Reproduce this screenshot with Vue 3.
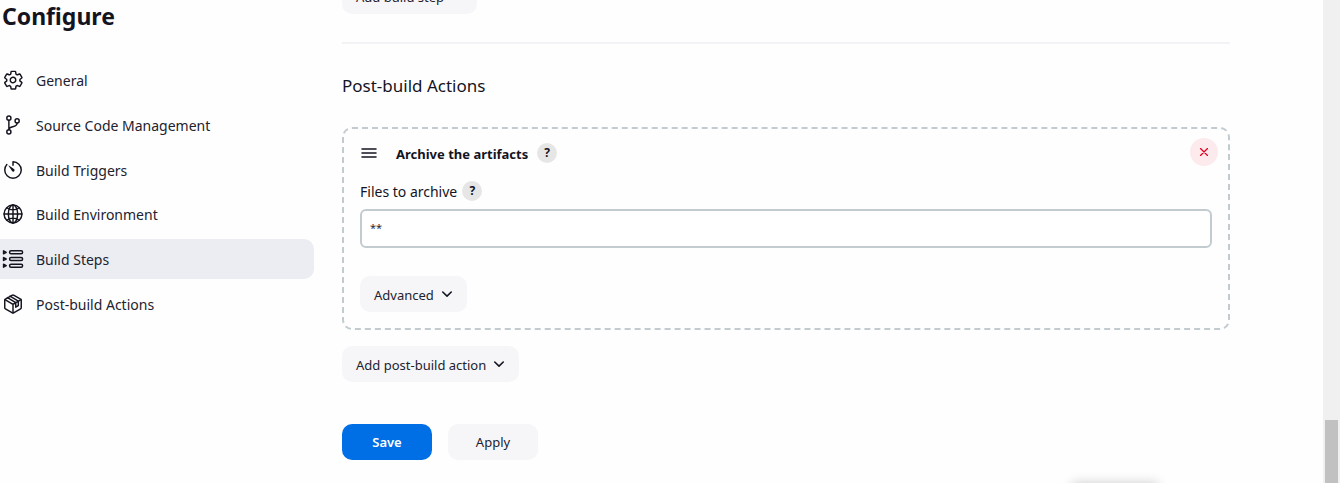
<script setup>
import { ref } from 'vue'

const sections = [
  { id: 'general', label: 'General' },
  { id: 'scm', label: 'Source Code Management' },
  { id: 'triggers', label: 'Build Triggers' },
  { id: 'environment', label: 'Build Environment' },
  { id: 'steps', label: 'Build Steps' },
  { id: 'post', label: 'Post-build Actions' }
]
const active = ref('steps')
const files = ref('**')
</script>

<template>
  <div class="page">
    <aside class="side">
      <h1>Configure</h1>
      <nav>
        <a
          v-for="s in sections"
          :key="s.id"
          :href="'#' + s.id"
          :class="{ active: active === s.id }"
          @click.prevent="active = s.id"
        >
          <svg v-if="s.id === 'general'" viewBox="0 0 512 512" aria-hidden="true">
            <path d="M262.3 192.3a64 64 0 1 0 57.4 57.4 64.100 64.100 0 0 0-57.400-57.400zM416.400 256a154 154 0 0 1-1.500 20.800l45.200 35.500a10.800 10.800 0 0 1 2.500 13.700l-42.800 74a10.800 10.800 0 0 1-13.100 4.600l-44.900-18.100a16.100 16.100 0 0 0-15.200 1.700 165 165 0 0 1-13.800 8 15.900 15.900 0 0 0-8.800 12.200l-6.700 47.900a11.100 11.100 0 0 1-10.800 9.200h-85.500a11.100 11.100 0 0 1-10.700-8.900l-6.700-47.800a16.100 16.100 0 0 0-9-12.300 155 155 0 0 1-13.700-8 16 16 0 0 0-15.100-1.700l-44.900 18.100a10.800 10.800 0 0 1-13.100-4.600l-42.800-74a10.800 10.800 0 0 1 2.500-13.700l38.200-30a16 16 0 0 0 6.100-14.100 159 159 0 0 1 0-15.900 16 16 0 0 0-6.100-13.900l-38.200-30a10.800 10.800 0 0 1-2.400-13.600l42.800-74a10.800 10.800 0 0 1 13.100-4.600l44.900 18.100a16.100 16.100 0 0 0 15.200-1.700 165 165 0 0 1 13.800-8 15.900 15.900 0 0 0 8.800-12.200l6.700-47.900a11.100 11.100 0 0 1 10.800-9.200h85.500a11.100 11.100 0 0 1 10.700 8.900l6.700 47.800a16.100 16.100 0 0 0 9 12.300 155 155 0 0 1 13.700 8 16 16 0 0 0 15.100 1.700l44.900-18.100a10.800 10.800 0 0 1 13.100 4.600l42.800 74a10.800 10.800 0 0 1-2.500 13.700l-38.200 30a16 16 0 0 0-6.100 14.100c.2 2.600.4 5.300.4 8z" />
          </svg>
          <svg v-else-if="s.id === 'scm'" viewBox="0 0 512 512" aria-hidden="true">
            <circle cx="160" cy="96" r="48" />
            <circle cx="160" cy="416" r="48" />
            <circle cx="352" cy="160" r="48" />
            <path d="M160 368V144M352 208c0 128-192 48-192 160" />
          </svg>
          <svg v-else-if="s.id === 'triggers'" viewBox="0 0 512 512" aria-hidden="true">
            <path d="M112.900 128.900A191.900 191.900 0 0 0 64 254.800C63.300 361 149.900 447.900 256.100 448 362.300 448 448 362.200 448 256S362.200 64.300 256.300 64v84" />
            <path class="solid" d="M234 279.300l-83-119.600a6.500 6.500 0 0 1 9-9l119.600 83a32.500 32.500 0 1 1-45.600 45.600z" />
          </svg>
          <svg v-else-if="s.id === 'environment'" viewBox="0 0 512 512" aria-hidden="true">
            <circle cx="256" cy="256" r="208" />
            <ellipse cx="256" cy="256" rx="108" ry="208" />
            <path d="M117 117c38 27 87 43 139 43s101-16 139-43M395 395c-38-27-87-43-139-43s-101 16-139 43M256 48v416M464 256H48" />
          </svg>
          <svg v-else-if="s.id === 'steps'" viewBox="0 0 512 512" aria-hidden="true">
            <rect x="176" y="66" width="304" height="68" rx="34" />
            <rect x="176" y="222" width="304" height="68" rx="34" />
            <rect x="176" y="378" width="304" height="68" rx="34" />
            <path d="M36 66v68l62-34zM36 222v68l62-34zM36 378v68l62-34z" />
          </svg>
          <svg v-else viewBox="0 0 512 512" aria-hidden="true">
            <path d="M448 341.400V170.600a32 32 0 0 0-15.900-27.600l-152-88.500a48 48 0 0 0-48.200 0l-152 88.500A32 32 0 0 0 64 170.600v170.800a32 32 0 0 0 15.900 27.600l152 88.500a48 48 0 0 0 48.200 0l152-88.500a32 32 0 0 0 15.900-27.600z" />
            <path d="M69 153l187 110 187-110M256 463V263M127 107l193 116v108l60-36V188L186 75" />
          </svg>
          <span>{{ s.label }}</span>
        </a>
      </nav>
    </aside>

    <main>
      <button type="button" class="btn">
        Add build step
        <svg viewBox="0 0 512 512" aria-hidden="true"><path d="M100 184l156 150 156-150" /></svg>
      </button>
      <hr />
      <h2>Post-build Actions</h2>

      <section class="chunk">
        <header>
          <svg class="handle" viewBox="0 0 16 16" aria-hidden="true"><path d="M1 5h14M1 9h14M1 13h14" /></svg>
          <b>Archive the artifacts</b>
          <button type="button" class="help" aria-label="Help for Archive the artifacts">?</button>
          <button type="button" class="remove" aria-label="Remove">
            <svg viewBox="0 0 8 8" aria-hidden="true"><path d="M0.500 0.500l7 7M7.500 0.500l-7 7" /></svg>
          </button>
        </header>
        <div class="field">
          <label for="files">Files to archive</label>
          <button type="button" class="help" aria-label="Help for Files to archive">?</button>
        </div>
        <input id="files" v-model="files" type="text" />
        <button type="button" class="btn">
          Advanced
          <svg viewBox="0 0 512 512" aria-hidden="true"><path d="M100 184l156 150 156-150" /></svg>
        </button>
      </section>

      <button type="button" class="btn">
        Add post-build action
        <svg viewBox="0 0 512 512" aria-hidden="true"><path d="M100 184l156 150 156-150" /></svg>
      </button>

      <footer>
        <button type="button" class="btn primary">Save</button>
        <button type="button" class="btn">Apply</button>
      </footer>
    </main>

    <div class="scrollbar"><i></i></div>
    <div class="toast"></div>
  </div>
</template>

<style>
body {
  margin: 0;
  overflow: hidden;
}
</style>

<style scoped>
.page {
  position: relative;
  display: grid;
  grid-template-columns: 314px minmax(0, 1fr) 17px;
  height: 100vh;
  overflow: hidden;
  background: #fefefe;
  color: #14141f;
  font-family: "Noto Sans", "Open Sans", sans-serif;
  font-size: 14px;
}
* {
  box-sizing: border-box;
}
svg {
  fill: none;
  stroke: currentColor;
  stroke-width: 34;
  stroke-linecap: round;
  stroke-linejoin: round;
  flex: none;
}
.solid {
  fill: currentColor;
  stroke: none;
}
h1 {
  margin: 0 0 28px 2px;
  font-size: 23px;
  line-height: 32px;
  font-weight: 700;
}
nav {
  display: flex;
  flex-direction: column;
  justify-content: space-between;
  height: 264px;
}
nav a {
  display: flex;
  align-items: center;
  gap: 12px;
  height: 40px;
  padding-left: 2px;
  border-radius: 0 10px 10px 0;
  color: #22222e;
  text-decoration: none;
}
nav a.active {
  background: #ecedf3;
}
nav svg {
  width: 22px;
  height: 22px;
  color: #14141f;
}
nav span {
  padding-top: 1px;
}
main {
  display: flex;
  flex-direction: column;
  align-items: flex-start;
  margin: -22px 93px 0 28px;
}
button {
  border: 0;
  padding: 0;
  font: inherit;
  color: inherit;
  cursor: pointer;
}
.btn {
  display: inline-flex;
  align-items: center;
  justify-content: center;
  gap: 6px;
  flex: none;
  height: 36px;
  padding: 1px 13px 0 14px;
  border-radius: 10px;
  background: #f6f6f9;
  color: #22222e;
  font-size: 13px;
}
.btn svg {
  width: 14px;
  height: 14px;
  color: #14141f;
  stroke-width: 58;
  margin-bottom: 2px;
}
hr {
  width: 100%;
  height: 2px;
  margin: 28px 0;
  border: 0;
  background: #f3f3f7;
}
h2 {
  margin: 0 0 28px;
  font-size: 17px;
  line-height: 27px;
  font-weight: 400;
}
.chunk {
  display: flex;
  flex-direction: column;
  align-items: flex-start;
  width: 100%;
  margin-bottom: 16px;
  padding: 9px 16px 16px;
  border: 2px dashed #c2cbd0;
  border-radius: 10px;
}
header {
  display: flex;
  align-items: center;
  align-self: stretch;
  height: 28px;
  margin-right: -6px;
}
header b {
  margin: 3px 9px 0 19px;
  font-size: 13px;
}
header .help {
  margin-top: 2px;
}
.handle {
  width: 16px;
  height: 16px;
  margin-left: 1px;
  stroke-width: 1.500;
}
.help {
  width: 20px;
  height: 20px;
  border-radius: 50%;
  background: #e6e6e7;
  font-size: 12px;
  line-height: 20px;
  font-weight: 700;
}
.remove {
  display: grid;
  place-items: center;
  width: 28px;
  height: 28px;
  margin-left: auto;
  border-radius: 50%;
  background: #fdeaec;
  color: #e6001f;
}
.remove svg {
  width: 8px;
  height: 8px;
  stroke-width: 1.300;
}
.field {
  display: flex;
  align-items: center;
  gap: 5px;
  height: 20px;
  margin: 15px 0 8px;
}
input {
  width: 100%;
  height: 39px;
  margin-bottom: 28px;
  padding: 0 8px 2px;
  border: 2px solid #c2cbd0;
  border-radius: 6px;
  background: #fff;
  color: #2c2c38;
  font: inherit;
  font-size: 11px;
}
footer {
  display: flex;
  gap: 16px;
  margin-top: 42px;
}
footer .btn {
  width: 90px;
  padding: 0;
}
.primary {
  background: #006fe6;
  color: #fff;
  font-weight: 600;
}
.scrollbar {
  display: flex;
  align-items: flex-end;
  padding: 0 2px;
  background: #f0f0f0;
}
.scrollbar i {
  width: 100%;
  height: 13%;
  background: #c1c1c1;
}
.toast {
  position: absolute;
  top: 100%;
  right: 182px;
  width: 86px;
  height: 30px;
  box-shadow: 0 0 12px rgba(0, 0, 0, 0.200);
}
</style>
